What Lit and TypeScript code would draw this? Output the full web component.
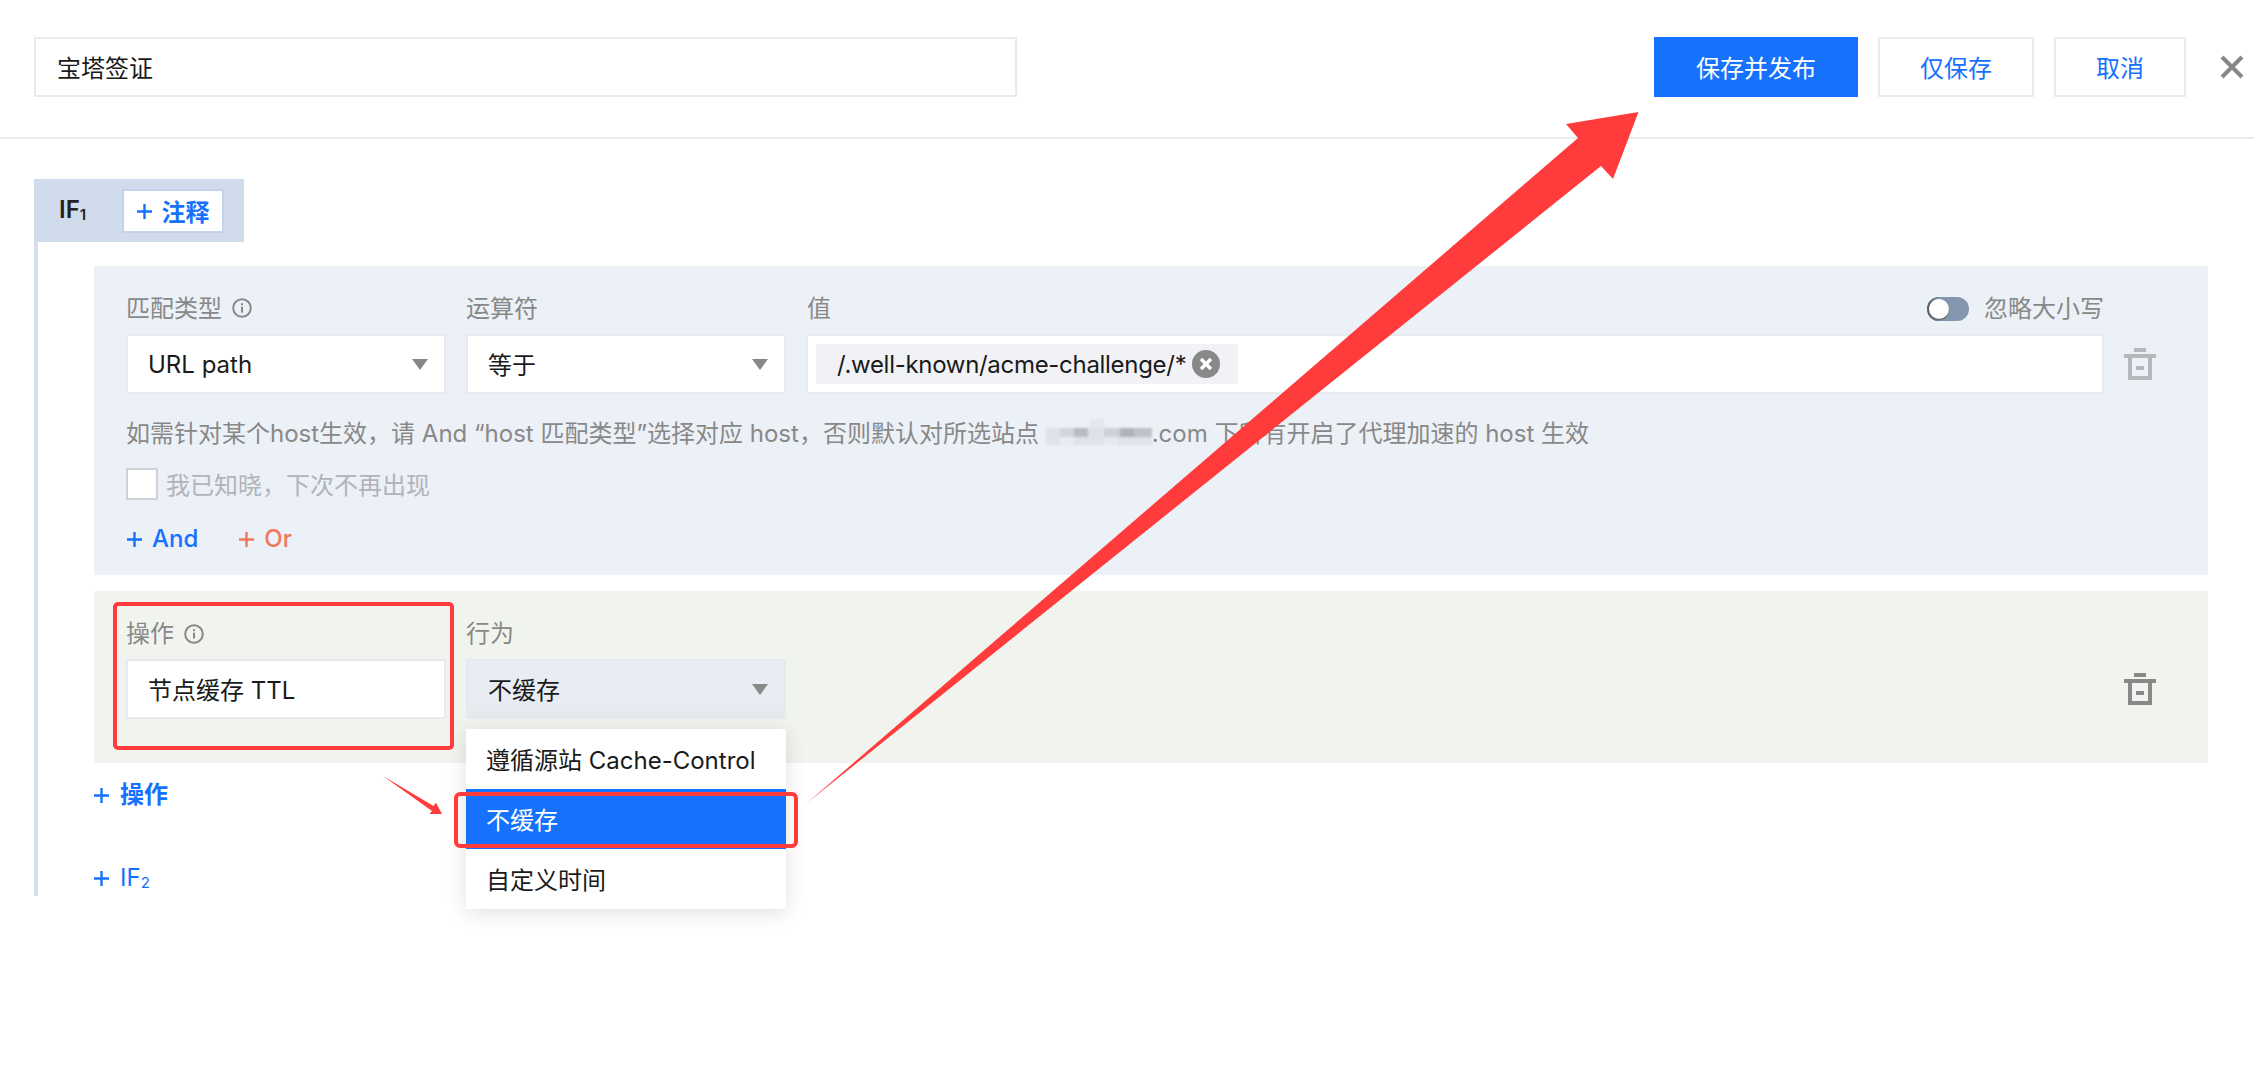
import { LitElement, html, css, svg } from "lit";
import { customElement } from "lit/decorators.js";

const infoIcon = html`<svg class="info" viewBox="0 0 20 20" width="20" height="20"><circle cx="10" cy="10" r="8.8" fill="none" stroke="#888" stroke-width="2"/><rect x="9" y="8.6" width="2" height="6" fill="#888"/><rect x="9" y="5.2" width="2" height="2" fill="#888"/></svg>`;
const trash = (c: string) => html`<svg class="trash" viewBox="0 0 32 32" width="32" height="32" fill="${c}"><rect x="10" y="0" width="12" height="4"/><rect x="0" y="6" width="32" height="4"/><path fill-rule="evenodd" d="M4 10h24v22H4zM8 10v18h16V10z"/><rect x="12" y="18" width="8" height="4"/></svg>`;
const caret = html`<svg class="caret" viewBox="0 0 16 11" width="16" height="11"><path d="M0 0h16L8 11z" fill="#888"/></svg>`;
const plus = html`<svg class="plus" viewBox="0 0 15 15" width="15" height="15"><path d="M7.5 0v15M0 7.5h15" stroke="currentColor" stroke-width="2.4" fill="none"/></svg>`;

const mosaic: [number, number, number, number, string][] = [
  [44, 0, 14, 9, "#e4e7ec"],
  [0, 9, 106, 17, "#dfe2e8"],
  [14, 9, 28, 9, "#d2d5da"],
  [28, 9, 14, 9, "#b9bcc2"],
  [58, 9, 16, 9, "#cfd2d8"],
  [74, 9, 14, 9, "#b0b3b8"],
  [88, 9, 18, 9, "#bfc2c7"],
  [14, 18, 14, 8, "#e8ebf0"],
  [58, 18, 14, 8, "#e6e9ee"],
];

@customElement("app-root")
export class AppRoot extends LitElement {
  static styles = css`
    :host {
      display: block;
      position: relative;
      width: 2254px;
      height: 1066px;
      overflow: hidden;
      background: #fff;
      font-family: Inter, "Noto Sans CJK SC", sans-serif;
      font-size: 24px;
      color: #1a1a1a;
    }
    * { box-sizing: border-box; }
    .t { padding-bottom: 2px; }
    .plus { display: block; flex: none; }
    .top {
      height: 139px;
      border-bottom: 2px solid #e7eaef;
      padding: 37px 10px 0 34px;
      display: flex;
      align-items: flex-start;
    }
    .title {
      width: 983px;
      height: 60px;
      border: 2px solid #e7eaef;
      padding: 0 0 2px 21px;
      display: flex;
      align-items: center;
    }
    .spacer { flex: 1; }
    .btn {
      height: 60px;
      border: 2px solid #e7eaef;
      color: #1671fd;
      display: flex;
      align-items: center;
      justify-content: center;
      margin-right: 20px;
      padding-bottom: 2px;
    }
    .btn.primary { background: #1671fd; border-color: #1671fd; color: #fff; width: 204px; }
    .btn.save { width: 156px; }
    .btn.cancel { width: 132px; margin-right: 34px; }
    .close { display: block; margin-top: 18px; }

    .rule { padding: 40px 46px 0 34px; }
    .tab {
      width: 210px;
      height: 63px;
      background: #d0dbeb;
      padding: 10px 0 0 25px;
      display: flex;
      align-items: flex-start;
    }
    .if { width: 63px; height: 44px; line-height: 42px; font-weight: 600; color: #222; }
    sub { font-size: 15px; line-height: 0; vertical-align: -2px; }
    .note {
      width: 102px;
      height: 44px;
      background: #fff;
      border: 2px solid #c5d3ea;
      color: #1671fd;
      font-weight: 700;
      display: flex;
      align-items: center;
      justify-content: center;
      gap: 10px;
    }
    .body {
      border-left: 4px solid #d4dfef;
      padding: 24px 0 0 56px;
      height: 654px;
    }
    .cond {
      height: 309px;
      background: #ecf0f7;
      padding: 29px 32px 0 32px;
    }
    .labels, .fields { display: flex; }
    .labels { height: 39px; padding-top: 1px; color: #888; align-items: flex-start; line-height: 26px; justify-content: flex-start; }
    .labels > div { display: flex; align-items: center; gap: 10px; }
    .labels .info { margin-bottom: 2px; }
    .w1 { width: 340px; flex: none; }
    .w2 { width: 341px; flex: none; }
    .fields { height: 60px; align-items: center; }
    .field {
      height: 60px;
      background: #fff;
      border: 2px solid #e7eaef;
      display: flex;
      align-items: center;
      padding-left: 20px;
    }
    .select { width: 320px; margin-right: 20px; padding-right: 16px; justify-content: space-between; flex: none; }
    .valuefield { width: 1298px; padding-left: 8px; flex: none; }
    .tag {
      width: 422px;
      height: 40px;
      background: #f0f2f5;
      padding-left: 21px;
      display: flex;
      align-items: center;
      justify-content: space-between;
      padding-right: 18px;
      white-space: nowrap;
      letter-spacing: -0.3px;
    }
    .trash { margin-left: 20px; display: block; flex: none; }
    .toggle-wrap { margin-left: auto; margin-right: 72px; color: #888; gap: 15px !important; }
    .toggle {
      width: 42px;
      height: 24px;
      border-radius: 12px;
      background: #8497ae;
      display: flex;
      padding: 2px;
      box-shadow: inset 2px 0 0 #5b6470;
    }
    .knob { width: 20px; height: 20px; border-radius: 50%; background: #fff; box-shadow: 0 1px 1px #555; }
    .hint {
      margin-top: 25px;
      height: 30px;
      line-height: 30px;
      color: #888;
      display: flex;
      white-space: nowrap;
    }
    .blur { display: block; flex: none; margin: 0; filter: blur(0.8px); }
    .check {
      display: flex;
      align-items: center;
      gap: 8px;
      height: 32px;
      margin-top: 19px;
      color: #b0b4ba;
    }
    .box { width: 32px; height: 32px; background: #fff; border: 2px solid #cfd3d9; }
    .logic { display: flex; margin-top: 24px; padding-left: 1px; gap: 41px; font-weight: 500; line-height: 30px; }
    .logic span { display: flex; align-items: center; gap: 10px; white-space: nowrap; }
    .and { color: #1671fd; }
    .or { color: #f2785a; }
    .action {
      height: 172px;
      margin-top: 16px;
      background: #f1f4ee;
      padding: 28px 32px 0 32px;
    }
    .alabels { display: flex; height: 40px; color: #888; line-height: 30px; }
    .alabels > div { display: flex; align-items: center; height: 30px; gap: 10px; }
    .afields { display: flex; align-items: center; }
    .afields .name { width: 320px; margin-right: 20px; flex: none; }
    .afields .behave {
      background: linear-gradient(#e9ecf2 70%, #e4e7ec);
      border-color: #e6e9ef;
      margin-right: 0;
    }
    .afields .trash { margin-left: auto; margin-right: 20px; }
    .add {
      height: 30px;
      line-height: 30px;
      color: #1671fd;
      display: flex;
      align-items: center;
      gap: 11px;
    }
    .addop { margin-top: 17px; font-weight: 700; }
    .addif { margin-top: 53px; }

    .menu {
      position: absolute;
      left: 466px;
      top: 729px;
      width: 320px;
      background: #fff;
      box-shadow: 0 4px 20px rgba(0, 0, 0, 0.12);
    }
    .item { height: 60px; display: flex; align-items: center; padding: 0 0 2px 20px; white-space: nowrap; }
    .item.on { background: #1671fd; color: #fff; }
    .mark {
      position: absolute;
      border: 4px solid #ff3b3b;
      border-radius: 5px;
      pointer-events: none;
    }
    .m1 { left: 113px; top: 602px; width: 341px; height: 148px; }
    .m2 { left: 454px; top: 792px; width: 344px; height: 56px; border-radius: 6px; }
    .arrows { position: absolute; left: 0; top: 0; pointer-events: none; }
  `;

  render() {
    return html`
      <div class="top">
        <div class="title">宝塔签证</div>
        <div class="spacer"></div>
        <div class="btn primary">保存并发布</div>
        <div class="btn save">仅保存</div>
        <div class="btn cancel">取消</div>
        <svg class="close" viewBox="0 0 24 24" width="24" height="24"><path d="M2 2l20 20M22 2L2 22" stroke="#888" stroke-width="4" fill="none"/></svg>
      </div>
      <div class="rule">
        <div class="tab">
          <div class="if">IF<sub>1</sub></div>
          <div class="note">${plus}<span class="t">注释</span></div>
        </div>
        <div class="body">
          <div class="cond">
            <div class="labels">
              <div class="w1">匹配类型 ${infoIcon}</div>
              <div class="w2">运算符</div>
              <div>值</div>
              <div class="toggle-wrap"><span class="toggle"><span class="knob"></span></span>忽略大小写</div>
            </div>
            <div class="fields">
              <div class="field select">URL path ${caret}</div>
              <div class="field select"><span class="t">等于</span> ${caret}</div>
              <div class="field valuefield">
                <div class="tag">/.well-known/acme-challenge/*
                  <svg viewBox="0 0 28 28" width="28" height="28"><circle cx="14" cy="14" r="14" fill="#888"/><path d="M9 9l10 10M19 9L9 19" stroke="#fff" stroke-width="3.4" fill="none"/></svg>
                </div>
              </div>
              ${trash("#b5b8bb")}
            </div>
            <div class="hint">如需针对某个host生效，请 And “host 匹配类型”选择对应 host，否则默认对所选站点&nbsp;<svg class="blur" width="106" height="26" viewBox="0 0 106 26">${mosaic.map(([x, y, w, h, c]) => svg`<rect x="${x}" y="${y}" width="${w}" height="${h}" fill="${c}"/>`)}</svg>.com 下所有开启了代理加速的 host 生效</div>
            <div class="check"><span class="box"></span><span class="t">我已知晓，下次不再出现</span></div>
            <div class="logic"><span class="and">${plus}And</span><span class="or">${plus}Or</span></div>
          </div>
          <div class="action">
            <div class="alabels">
              <div class="w1">操作 ${infoIcon}</div>
              <div>行为</div>
            </div>
            <div class="afields">
              <div class="field name"><span class="t">节点缓存 TTL</span></div>
              <div class="field select behave"><span class="t">不缓存</span> ${caret}</div>
              ${trash("#888")}
            </div>
          </div>
          <div class="add addop">${plus}<span>操作</span></div>
          <div class="add addif">${plus}<span>IF<sub>2</sub></span></div>
        </div>
      </div>
      <div class="menu">
        <div class="item">遵循源站 Cache-Control</div>
        <div class="item on">不缓存</div>
        <div class="item">自定义时间</div>
      </div>
      <div class="mark m1"></div>
      <div class="mark m2"></div>
      <svg class="arrows" width="2254" height="1066" viewBox="0 0 2254 1066">
        <path d="M1638.5 112L1566 124L1578 138L807 803L1601 166L1613 179Z" fill="#ff3b3b"/>
        <path d="M383 776L433.5 806L436 802.7L442 814L429.5 814L432 811Z" fill="#ff3b3b"/>
      </svg>
    `;
  }
}
